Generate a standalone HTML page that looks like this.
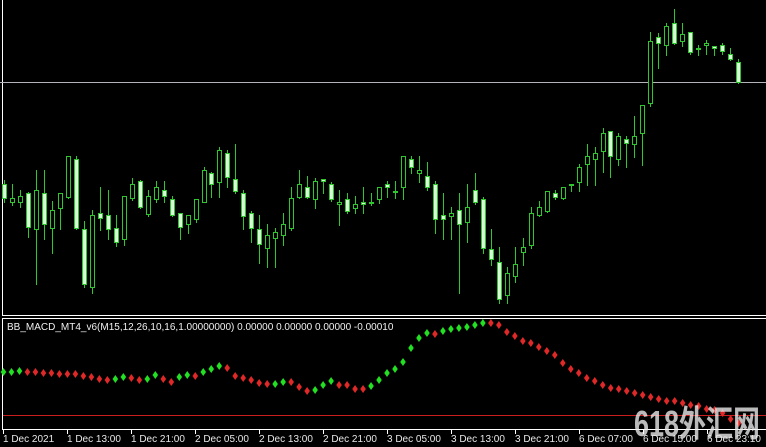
<!DOCTYPE html>
<html><head><meta charset="utf-8"><style>
html,body{margin:0;padding:0;background:#000;width:766px;height:447px;overflow:hidden}
svg{display:block}
text{font-family:"Liberation Sans",sans-serif}
</style></head><body>
<svg id="s" width="766" height="447" viewBox="0 0 766 447" xmlns="http://www.w3.org/2000/svg">
<rect width="766" height="447" fill="#000"/>
<line x1="2.5" y1="0" x2="2.5" y2="316" stroke="#fff"/>
<line x1="0" y1="82.5" x2="766" y2="82.5" stroke="#b4b4bc"/>
<line x1="2" y1="315.5" x2="766" y2="315.5" stroke="#fff"/>
<line x1="2" y1="318.5" x2="766" y2="318.5" stroke="#fff"/>
<line x1="2.5" y1="318" x2="2.5" y2="429" stroke="#fff"/>
<rect x="3" y="415" width="763" height="1" fill="#c81e1e"/>
<line x1="2" y1="429.5" x2="766" y2="429.5" stroke="#fff"/>
<g id="c"></g>
<g id="d"></g>
<text x="7" y="330" font-size="10" fill="#f0f0f0">BB_MACD_MT4_v6(M15,12,26,10,16,1.00000000) 0.00000 0.00000 0.00000 -0.00010</text>
<text x="697" y="436" font-size="36" font-weight="bold" fill="#e8e8e8" fill-opacity="0.8" text-anchor="middle" style="font-family:'Liberation Sans','Noto Sans CJK SC',sans-serif" textLength="126" lengthAdjust="spacingAndGlyphs">618外汇网</text>
<g font-size="10" fill="#e8e8e8">
<text x="3" y="442">1 Dec 2021</text>
<text x="67" y="442">1 Dec 13:00</text>
<text x="131" y="442">1 Dec 21:00</text>
<text x="195" y="442">2 Dec 05:00</text>
<text x="259" y="442">2 Dec 13:00</text>
<text x="323" y="442">2 Dec 21:00</text>
<text x="387" y="442">3 Dec 05:00</text>
<text x="451" y="442">3 Dec 13:00</text>
<text x="515" y="442">3 Dec 21:00</text>
<text x="579" y="442">6 Dec 07:00</text>
<text x="643" y="442">6 Dec 15:00</text>
<text x="707" y="442">6 Dec 23:10</text>
</g>
<g stroke="#fff">
<line x1="3.5" y1="430" x2="3.5" y2="434"/><line x1="67.5" y1="430" x2="67.5" y2="434"/><line x1="131.5" y1="430" x2="131.5" y2="434"/><line x1="195.5" y1="430" x2="195.5" y2="434"/><line x1="259.5" y1="430" x2="259.5" y2="434"/><line x1="323.5" y1="430" x2="323.5" y2="434"/><line x1="387.5" y1="430" x2="387.5" y2="434"/><line x1="451.5" y1="430" x2="451.5" y2="434"/><line x1="515.5" y1="430" x2="515.5" y2="434"/><line x1="579.5" y1="430" x2="579.5" y2="434"/><line x1="643.5" y1="430" x2="643.5" y2="434"/><line x1="707.5" y1="430" x2="707.5" y2="434"/>
</g>
</svg>
<script>
var C=[[180,184,198,202,1],[184,198,202,205,0],[190,196,202,207,0],[192,193,227,237,1],[170,190,229,284,0],[170,193,224,239,1],[201,210,228,253,0],[193,193,208,229,0],[156,156,197,198,0],[156,159,228,229,1],[221,229,284,287,1],[210,215,287,293,0],[187,213,218,230,1],[190,215,229,239,1],[215,228,242,246,1],[196,196,239,245,0],[178,184,198,200,0],[180,181,207,208,1],[190,196,214,216,0],[181,187,199,202,0],[181,190,196,202,1],[196,199,215,216,1],[213,213,227,239,1],[215,215,224,233,0],[199,199,219,222,0],[167,170,202,202,0],[172,173,184,197,1],[147,150,182,197,0],[150,153,177,187,1],[144,179,191,193,1],[190,193,216,229,1],[211,213,228,242,1],[215,229,244,263,1],[224,235,248,267,0],[228,232,238,267,0],[213,224,235,245,0],[187,198,228,230,0],[170,184,197,198,0],[176,187,197,198,1],[178,181,199,208,0],[179,179,181,193,1],[182,184,199,201,1],[190,202,204,225,0],[193,199,211,213,1],[196,204,208,213,0],[187,202,204,213,1],[193,202,202,205,0],[187,187,199,203,0],[181,184,187,197,1],[181,191,191,198,0],[156,156,187,199,0],[156,159,167,173,1],[156,170,173,182,0],[162,176,187,190,1],[181,184,219,233,1],[193,215,219,239,1],[207,213,216,239,0],[193,210,224,293,1],[184,207,222,242,0],[173,190,202,204,1],[197,199,248,253,1],[229,249,259,265,1],[247,262,299,303,1],[267,273,295,303,0],[247,264,276,282,0],[238,247,252,265,0],[207,213,245,248,0],[201,207,215,216,0],[191,191,211,212,0],[190,193,197,199,1],[187,187,198,199,0],[184,184,184,191,0],[164,167,182,191,0],[144,156,164,185,0],[147,153,159,185,0],[128,133,151,172,0],[131,131,156,177,1],[133,136,159,165,0],[136,139,143,167,1],[116,136,144,157,0],[105,105,133,165,0],[32,41,103,106,0],[33,37,43,68,1],[23,26,45,55,0],[9,23,43,44,1],[23,34,41,46,0],[32,32,52,54,1],[45,48,48,55,0],[40,43,45,54,0],[46,46,48,55,1],[43,45,51,54,1],[48,54,59,60,1],[59,62,82,83,1]];
var D="372G372G371G372R372R373R373R374R374R374R376R377R379R380R379G377G378R380R379G375G379R382R377G375G376R372G369G366G368R376R378R380R383R384R384G382G382R387R391R390G385G381G385R385R389R389R386G380G373G369G362G348G338G333G334R331G329G328G327G325G323G323R325R332R336R341R343R347R351R355R363R369R373R378R381R385R388R389R391R393R395R397R399R401R401R403R405R406R409R410R413R419R423R";
var g=document.getElementById('c'),h='';
for(var i=0;i<C.length;i++){var c=C[i],x=4+8*i-0.02*i;var xr=Math.round(x);
h+='<line x1="'+(xr+0.5)+'" y1="'+c[0]+'" x2="'+(xr+0.5)+'" y2="'+(c[3]+1)+'" stroke="#2ec82e"/>';
var bh=Math.max(1,c[2]-c[1]);
h+='<rect x="'+(xr-1.5)+'" y="'+(c[1]+0.5)+'" width="4" height="'+bh+'" fill="'+(c[4]?'#d8f8d8':'#000')+'" stroke="#2ec82e"/>';}
g.innerHTML=h;
var d=document.getElementById('d'),k='',n=0;
for(var j=0;j<D.length;j+=4){var y=+D.substr(j,3),col=D[j+3]=='G'?'#22e022':'#e02828';var x=3.5+8*n-0.01*n;n++;
k+='<polygon points="'+x+','+(y-4)+' '+(x+2.8)+','+y+' '+x+','+(y+4)+' '+(x-2.8)+','+y+'" fill="'+col+'"/>';}
d.innerHTML=k;
</script>
</body></html>
